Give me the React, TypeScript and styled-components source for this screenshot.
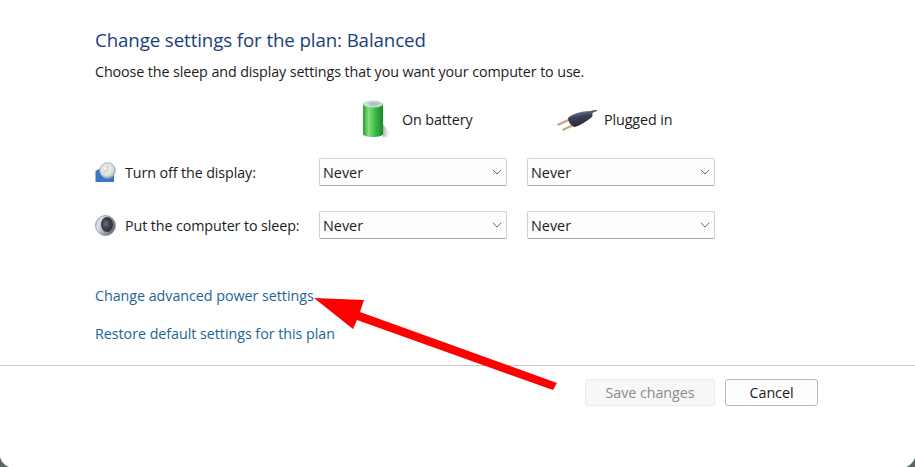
import React from "react";
import styled, { createGlobalStyle } from "styled-components";

const Global = createGlobalStyle`
  html, body { margin: 0; padding: 0; background: #fff; }
  body { font-family: "Open Sans", "Noto Sans", "Liberation Sans", sans-serif; }
`;

const Page = styled.div`
  position: relative;
  width: 915px;
  height: 467px;
  overflow: hidden;
  background: #fff;
  color: #1c1c1c;
`;

const Content = styled.div`
  display: flex;
  flex-direction: column;
  height: 365px;
  box-sizing: border-box;
  padding: 26px 0 0 95px;
`;

const Title = styled.h1`
  margin: 0;
  height: 27px;
  font-size: 18.7px;
  line-height: 27px;
  font-weight: 400;
  color: #1a3e78;
  letter-spacing: -0.1px;
`;

const Description = styled.p`
  margin: 9px 0 0;
  height: 20px;
  font-size: 14.3px;
  line-height: 20px;
  letter-spacing: -0.1px;
`;

const Header = styled.div`
  display: flex;
  height: 42px;
  margin-top: 16px;
  padding-left: 224px;
  gap: 20px;
`;

const HeaderCell = styled.div<{ $inset: number; $gap: number }>`
  display: flex;
  align-items: center;
  width: 188px;
  box-sizing: border-box;
  padding-left: ${(p) => p.$inset}px;
  gap: ${(p) => p.$gap}px;
  font-size: 14.3px;
  letter-spacing: -0.1px;
`;

const SettingRow = styled.div<{ $top: number }>`
  display: flex;
  align-items: center;
  height: 28px;
  margin-top: ${(p) => p.$top}px;
`;

const RowLabel = styled.div`
  display: flex;
  align-items: center;
  gap: 9px;
  width: 224px;
  font-size: 14.3px;
  letter-spacing: -0.1px;
`;

const Selects = styled.div`
  display: flex;
  gap: 20px;
`;

const Select = styled.div`
  display: flex;
  align-items: center;
  justify-content: space-between;
  width: 188px;
  height: 28px;
  box-sizing: border-box;
  padding: 0 4px 0 3px;
  background: #fdfdfd;
  border: 1px solid #d0d0d0;
  border-bottom-color: #a8a8a8;
  border-radius: 2px;
  font-size: 14.4px;
`;

const LinkText = styled.a<{ $top: number }>`
  display: block;
  height: 20px;
  margin-top: ${(p) => p.$top}px;
  font-size: 14.3px;
  line-height: 20px;
  color: #1d6596;
  letter-spacing: -0.04px;
`;

const Footer = styled.div`
  display: flex;
  justify-content: flex-start;
  gap: 10px;
  height: 101px;
  box-sizing: border-box;
  padding: 13px 0 0 585px;
  border-top: 1px solid #c9c9c9;
`;

const Button = styled.div<{ $disabled?: boolean; $width: number }>`
  display: flex;
  align-items: center;
  justify-content: center;
  width: ${(p) => p.$width}px;
  height: 27px;
  box-sizing: border-box;
  border-radius: 3px;
  border: 1px solid ${(p) => (p.$disabled ? "#e9e9e9" : "#b9b9b9")};
  background: ${(p) => (p.$disabled ? "#f7f7f7" : "#fefefe")};
  color: ${(p) => (p.$disabled ? "#8c8c8c" : "#1a1a1a")};
  font-size: 14.3px;
  letter-spacing: -0.05px;
`;

const ArrowOverlay = styled.svg`
  position: absolute;
  left: 0;
  top: 0;
  pointer-events: none;
`;

const Chevron = () => (
  <svg width="10" height="6" viewBox="0 0 10 6" fill="none">
    <path d="M0.7 0.7 L5 5 L9.3 0.7" stroke="#6a6a6a" strokeWidth="1" />
  </svg>
);

const BatteryIcon = () => (
  <svg width="30" height="40" viewBox="0 0 30 40">
    <defs>
      <linearGradient id="bat" x1="0" x2="1" y1="0" y2="0">
        <stop offset="0" stopColor="#2a9a35" />
        <stop offset="0.28" stopColor="#86e07c" />
        <stop offset="0.62" stopColor="#39b84a" />
        <stop offset="1" stopColor="#188a2c" />
      </linearGradient>
      <linearGradient id="batshadow" x1="0" x2="1" y1="0" y2="0">
        <stop offset="0" stopColor="#8a8a8a" />
        <stop offset="1" stopColor="#ffffff" stopOpacity="0" />
      </linearGradient>
    </defs>
    <path d="M21 25 L30 37 L21 38 Z" fill="url(#batshadow)" opacity="0.7" />
    <path d="M1 5 C1 3 21 3 21 5 L21 35 C21 39 1 39 1 35 Z" fill="url(#bat)" />
    <ellipse cx="11" cy="5" rx="10" ry="3.6" fill="#bfe6bc" />
    <ellipse cx="12" cy="4.800" rx="5.500" ry="2.200" fill="#bdb8dc" />
  </svg>
);

const PlugIcon = () => (
  <svg width="40" height="24" viewBox="0 0 40 24">
    <defs>
      <linearGradient id="plugbody" x1="0.35" y1="0" x2="0.6" y2="1">
        <stop offset="0" stopColor="#7b84a0" />
        <stop offset="0.35" stopColor="#3c4258" />
        <stop offset="1" stopColor="#23263a" />
      </linearGradient>
    </defs>
    <path d="M0 17 L12 11.500 L13 13.500 L1 19 Z" fill="#c8a878" />
    <path d="M5 22 L18 16 L19 18 L6 24 Z" fill="#c8a878" />
    <path d="M11 11 C15 7 24 4 33 4 C36 6 36 8 35 10 C30 14 24 18 18 20 C14 19 11 15 11 11 Z" fill="url(#plugbody)" />
    <path d="M33 4 C35 3.500 38 3 40 3 L40 4 C38 4.500 36 5.500 35 6.500 Z" fill="#50536a" />
  </svg>
);

const DisplayIcon = () => (
  <svg width="21" height="21" viewBox="0 0 21 21">
    <defs>
      <radialGradient id="clock" cx="0.45" cy="0.4" r="0.6">
        <stop offset="0" stopColor="#f4f6f6" />
        <stop offset="0.75" stopColor="#d2dbd8" />
        <stop offset="1" stopColor="#8fa2b4" />
      </radialGradient>
    </defs>
    <path d="M0.5 9 L8 5 L19 12 L19 20 L0.5 20 Z" fill="#3f73c4" />
    <circle cx="12.500" cy="8.500" r="7.800" fill="url(#clock)" stroke="#9aabbc" strokeWidth="0.8" />
    <path d="M12.500 4 L12.500 8.500 L8.500 9.800" stroke="#c2b98c" strokeWidth="0.8" fill="none" />
  </svg>
);

const SleepIcon = () => (
  <svg width="21" height="21" viewBox="0 0 21 21">
    <defs>
      <linearGradient id="sphere" x1="0" y1="0" x2="1" y2="0.4">
        <stop offset="0" stopColor="#b3bccd" />
        <stop offset="0.3" stopColor="#dbe0e9" />
        <stop offset="0.75" stopColor="#8e94a2" />
        <stop offset="1" stopColor="#6d7280" />
      </linearGradient>
      <radialGradient id="moonshade" cx="0.4" cy="0.45" r="0.65">
        <stop offset="0" stopColor="#6d7078" />
        <stop offset="0.5" stopColor="#3d3f46" />
        <stop offset="1" stopColor="#2f3037" />
      </radialGradient>
    </defs>
    <circle cx="10.500" cy="10.500" r="10" fill="url(#sphere)" stroke="#7f8798" strokeWidth="0.7" />
    <ellipse cx="12" cy="9.500" rx="6" ry="7.500" fill="url(#moonshade)" />
  </svg>
);

const CornerMark = styled.svg<{ $side: "left" | "right" }>`
  position: absolute;
  bottom: 0;
  ${(p) => p.$side}: 0;
  pointer-events: none;
  transform: ${(p) => (p.$side === "right" ? "scaleX(-1)" : "none")};
`;

const Corner = ({ side }: { side: "left" | "right" }) => (
  <CornerMark $side={side} width="9" height="10" viewBox="0 0 9 10">
    <path d="M0 0 C1 4 4 8 9 10 L0 10 Z" fill="#5c6660" />
  </CornerMark>
);

export default function App() {
  return (
    <Page>
      <Global />
      <Content>
        <Title>Change settings for the plan: Balanced</Title>
        <Description>Choose the sleep and display settings that you want your computer to use.</Description>
        <Header>
          <HeaderCell $inset={43} $gap={10}>
            <BatteryIcon />
            <span>On battery</span>
          </HeaderCell>
          <HeaderCell $inset={30} $gap={7}>
            <PlugIcon />
            <span>Plugged in</span>
          </HeaderCell>
        </Header>
        <SettingRow $top={18}>
          <RowLabel>
            <DisplayIcon />
            <span>Turn off the display:</span>
          </RowLabel>
          <Selects>
            <Select>Never<Chevron /></Select>
            <Select>Never<Chevron /></Select>
          </Selects>
        </SettingRow>
        <SettingRow $top={25}>
          <RowLabel>
            <SleepIcon />
            <span>Put the computer to sleep:</span>
          </RowLabel>
          <Selects>
            <Select>Never<Chevron /></Select>
            <Select>Never<Chevron /></Select>
          </Selects>
        </SettingRow>
        <LinkText $top={47}>Change advanced power settings</LinkText>
        <LinkText $top={18}>Restore default settings for this plan</LinkText>
      </Content>
      <Footer>
        <Button $disabled $width={130}>Save changes</Button>
        <Button $width={93}>Cancel</Button>
      </Footer>
      <ArrowOverlay width="915" height="467" viewBox="0 0 915 467">
        <path d="M314 298 L364 300 L360 312 L557 383 L553 390 L357 320 L353 329 Z" fill="#fe0000" />
      </ArrowOverlay>
      <Corner side="left" />
      <Corner side="right" />
    </Page>
  );
}
